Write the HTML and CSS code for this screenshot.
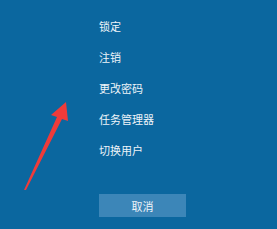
FILE: index.html
```html
<!DOCTYPE html>
<html lang="zh-CN">
<head>
    <meta charset="UTF-8">
    <meta name="viewport" content="width=device-width, initial-scale=1.0">
    <title>安全选项</title>
    <link rel="stylesheet" href="styles.css">
</head>
<body>
    <div class="menu">
        <div class="item">锁定</div>
        <div class="item">注销</div>
        <div class="item">更改密码</div>
        <div class="item">任务管理器</div>
        <div class="item">切换用户</div>
        <button class="cancel">取消</button>
    </div>

    <!-- red pointer drawn over the screen -->
    <svg class="arrow" width="277" height="229" viewBox="0 0 277 229">
        <polygon points="24,190 57,117 51,115 66,102 68,121 62,119 26,190" fill="#ef3b3a"/>
    </svg>
</body>
</html>
```

FILE: styles.css
```css
html, body {
    margin: 0;
    height: 100%;
}
body {
    background-color: #0b679f;
    color: #eef4f9;
    font-family: "Noto Sans CJK SC", "Noto Sans", sans-serif;
    overflow: hidden;
}
.menu {
    padding: 11px 0 0 99px;
    display: flex;
    flex-direction: column;
    align-items: flex-start;
}
.item {
    font-size: 11px;
    line-height: 31px;
}
.cancel {
    margin-top: 28px;
    width: 87px;
    height: 23px;
    background-color: #3c86b8;
    color: #eef4f9;
    border: none;
    font-family: inherit;
    font-size: 11px;
    padding: 0;
}
.arrow {
    position: absolute;
    left: 0;
    top: 0;
}
```
